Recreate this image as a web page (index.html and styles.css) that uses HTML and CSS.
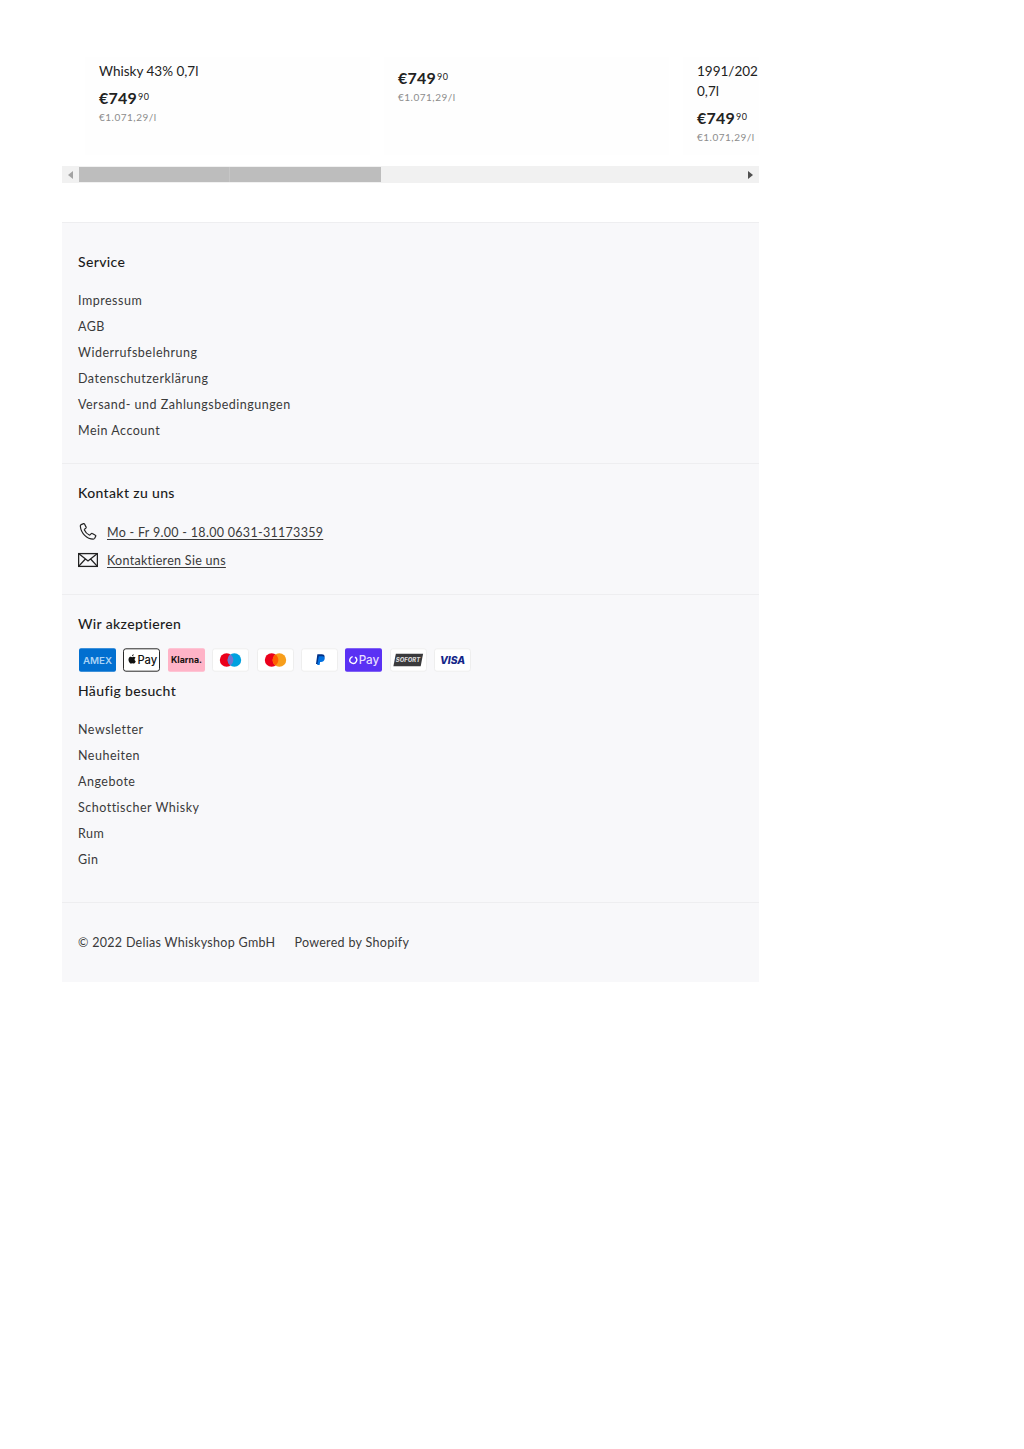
FILE: index.html
```html
<!DOCTYPE html>
<html lang="de">
<head>
  <meta charset="UTF-8" />
  <title>Delias Whiskyshop</title>
  <link rel="stylesheet" href="styles.css">
</head>
<body>
  <div class="page">
    <!-- Product slider, cut off at the right -->
    <div class="slider">
      <div class="card">
        <p class="card-title">Whisky 43% 0,7l</p>
        <p class="price">€749<sup>90</sup></p>
        <p class="unit">€1.071,29/l</p>
      </div>
      <div class="card">
        <p class="price">€749<sup>90</sup></p>
        <p class="unit">€1.071,29/l</p>
      </div>
      <div class="card">
        <p class="card-title">1991/202<br>0,7l</p>
        <p class="price">€749<sup>90</sup></p>
        <p class="unit">€1.071,29/l</p>
      </div>
    </div>
    <div class="scrollbar">
      <span class="arrow arrow-left"></span>
      <div class="scroll-track"><div class="scroll-thumb"></div></div>
      <span class="arrow arrow-right"></span>
    </div>

    <footer class="footer">
      <section class="block block-service">
        <h4>Service</h4>
        <ul class="links">
          <li><a href="#">Impressum</a></li>
          <li><a href="#">AGB</a></li>
          <li><a href="#">Widerrufsbelehrung</a></li>
          <li><a href="#">Datenschutzerklärung</a></li>
          <li><a href="#">Versand- und Zahlungsbedingungen</a></li>
          <li><a href="#">Mein Account</a></li>
        </ul>
      </section>

      <section class="block block-contact">
        <h4>Kontakt zu uns</h4>
        <div class="contact-row">
          <svg class="contact-icon" viewBox="0 0 20 20" fill="none" stroke="#222" stroke-width="1.2" stroke-linejoin="round">
            <path d="M3.2 2.6 5.6 1.6c.4-.1.7 0 .9.4l1.6 3.1c.2.4.1.7-.2 1L6.500 7.300c-.2.2-.2.4-.1.7.9 2.100 2.700 4 4.900 5 .3.100.5.100.7-.1l1.300-1.300c.3-.3.700-.3 1-.1l3.100 1.800c.4.200.5.600.3 1l-1 2c-.3.500-.8.800-1.400.8C9 17.100 3 11.500 2.300 4c0-.6.300-1.200.9-1.400Z"/>
          </svg>
          <a class="contact-link" href="#">Mo - Fr 9.00 - 18.00 0631-31173359</a>
        </div>
        <div class="contact-row">
          <svg class="contact-icon" viewBox="0 0 20 14" fill="none" stroke="#222" stroke-width="1.300">
            <rect x=".6" y=".6" width="18.800" height="12.800"/>
            <path d="M.6.6 10 8l9.400-7.400M.6 13.400l6.800-7.400M19.400 13.400 12.600 6"/>
          </svg>
          <a class="contact-link" href="#">Kontaktieren Sie uns</a>
        </div>
      </section>

      <section class="block block-pay">
        <h4>Wir akzeptieren</h4>
        <div class="pay-row">
          <svg class="pay" viewBox="0 0 38 24"><rect width="38" height="24" rx="2" fill="#016fd0"/><text x="19" y="15.800" class="pay-amex" textLength="30" lengthAdjust="spacingAndGlyphs">AMEX</text></svg>
          <svg class="pay" viewBox="0 0 38 24"><rect x=".5" y=".5" width="37" height="23" rx="2.500" fill="#fff" stroke="#222"/><path d="M9.300 8.200c.5 0 1-.4 1.300-.8.300-.4.400-.9.400-1.300-.5 0-1 .3-1.300.7-.3.300-.5.800-.4 1.400ZM11 8.700c-.7 0-1.200.4-1.600.4s-.9-.4-1.500-.4c-.8 0-1.500.5-1.900 1.200-.8 1.400-.2 3.500.6 4.700.4.500.8 1.200 1.500 1.100.6 0 .8-.4 1.500-.4s.9.400 1.500.4c.6 0 1-.5 1.400-1.100.4-.6.600-1.200.6-1.300 0 0-1.200-.5-1.200-1.800 0-1.100.9-1.600 1-1.700-.6-.8-1.400-.9-1.900-1.100Z" fill="#111"/><text x="14.800" y="16" class="pay-apple">Pay</text></svg>
          <svg class="pay" viewBox="0 0 38 24"><rect width="38" height="24" rx="2" fill="#ffb3c7"/><text x="19" y="15.200" class="pay-klarna">Klarna.</text></svg>
          <svg class="pay" viewBox="0 0 38 24"><rect x=".5" y=".5" width="37" height="23" rx="2.500" fill="#fff" stroke="#eee"/><circle cx="15" cy="12" r="7" fill="#eb001b"/><circle cx="23" cy="12" r="7" fill="#00a1df"/><path d="M19 6.300a7 7 0 0 1 0 11.400 7 7 0 0 1 0-11.400Z" fill="#7375cf"/></svg>
          <svg class="pay" viewBox="0 0 38 24"><rect x=".5" y=".5" width="37" height="23" rx="2.500" fill="#fff" stroke="#eee"/><circle cx="15" cy="12" r="7" fill="#eb001b"/><circle cx="23" cy="12" r="7" fill="#f79e1b"/><path d="M19 6.300a7 7 0 0 1 0 11.400 7 7 0 0 1 0-11.400Z" fill="#ff5f00"/></svg>
          <svg class="pay" viewBox="0 0 38 24"><rect x=".5" y=".5" width="37" height="23" rx="2.500" fill="#fff" stroke="#eee"/><path d="M16.800 6h4.400c2.300 0 3.300 1.200 3 3-.4 2.300-2 3.400-4 3.400h-1.300l-.6 3.600h-2.900Z" fill="#003087"/><path d="M18.300 8.200h3.800c1.600.3 2.500 1.300 2.200 2.900-.4 2-1.900 3-3.800 3h-.9l-.5 3h-2.500Z" fill="#0070e0"/></svg>
          <svg class="pay" viewBox="0 0 38 24"><rect width="38" height="24" rx="2" fill="#5a31f4"/><circle cx="8.500" cy="12" r="3.500" fill="none" stroke="#fff" stroke-width="1.400" stroke-dasharray="19 3" transform="rotate(-60 8.500 12)"/><text x="14" y="16.200" class="pay-shop">Pay</text></svg>
          <svg class="pay" viewBox="0 0 38 24"><rect x=".5" y=".5" width="37" height="23" rx="2.500" fill="#fff" stroke="#eee"/><path d="M6 5.500h28l-2.500 13H3.500Z" fill="#3a3a3c"/><text x="18.500" y="14.300" class="pay-sofort" textLength="25" lengthAdjust="spacingAndGlyphs">SOFORT</text></svg>
          <svg class="pay" viewBox="0 0 38 24"><rect x=".5" y=".5" width="37" height="23" rx="2.500" fill="#fff" stroke="#eee"/><text x="19" y="16" class="pay-visa">VISA</text></svg>
        </div>
        <h4 class="pay-next">Häufig besucht</h4>
        <ul class="links">
          <li><a href="#">Newsletter</a></li>
          <li><a href="#">Neuheiten</a></li>
          <li><a href="#">Angebote</a></li>
          <li><a href="#">Schottischer Whisky</a></li>
          <li><a href="#">Rum</a></li>
          <li><a href="#">Gin</a></li>
        </ul>
      </section>

      <section class="block block-legal">
        <span>© 2022 Delias Whiskyshop GmbH</span>
        <span>Powered by Shopify</span>
      </section>
    </footer>
  </div>
</body>
</html>
```

FILE: styles.css
```css
:root {
  --ink: #1c1c1c;
  --text: #3a3a3a;
  --line: #eeeef0;
  --panel: #f8f8fa;
}
*, *::before, *::after { box-sizing: border-box; }
html, body { margin: 0; }
body {
  background: #fff;
  color: var(--text);
  font-family: "Lato", "Open Sans", sans-serif;
  font-size: 12.500px;
  min-height: 1449px;
}
.page {
  width: 697px;
  margin-left: 62px;
  padding-top: 57px;
}

/* Slider */
.slider {
  display: flex;
  gap: 14px;
  height: 109px;
  padding-left: 23px;
  overflow: hidden;
}
.card {
  flex: 0 0 285px;
  height: 98px;
  padding: 4px 14px;
  background: #fefefe;
}
.card p { margin: 0; }
.card-title {
  font-size: 13.500px;
  line-height: 20px;
  color: #222;
  white-space: nowrap;
}
.card .price {
  margin-top: 7px;
  font-size: 16px;
  line-height: 20px;
  font-weight: 700;
  color: #222;
  letter-spacing: .2px;
}
.price sup {
  font-size: 9px;
  font-weight: 400;
  letter-spacing: .5px;
  margin-left: 1px;
  vertical-align: 4px;
  line-height: 0;
}
.unit {
  font-size: 10px;
  line-height: 19px;
  color: #8c8c8c;
  letter-spacing: .5px;
}

/* Scrollbar */
.scrollbar {
  display: flex;
  align-items: center;
  height: 17px;
  background: #f1f1f1;
}
.arrow {
  flex: 0 0 17px;
  display: flex;
  justify-content: center;
}
.arrow::before {
  content: "";
  border-style: solid;
  border-color: transparent;
  border-width: 4px 5px;
}
.arrow-left::before { border-right-color: #a3a3a3; border-left-width: 0; }
.arrow-right::before { border-left-color: #505050; border-right-width: 0; }
.scroll-track { flex: 1; height: 15px; }
.scroll-thumb {
  width: 302px;
  height: 15px;
  background: linear-gradient(90deg, #bdbdbd 150px, #c6c6c6 150px, #c6c6c6 151px, #bdbdbd 151px);
}

/* Footer */
.footer {
  margin-top: 39px;
  background: var(--panel);
}
.block {
  padding: 20px 16px;
  border-top: 1px solid var(--line);
}
.block-service { padding-top: 29px; padding-bottom: 19px; }
.block-contact { padding-top: 19px; }
.block-pay { padding-top: 19px; padding-bottom: 29px; }
.block-legal {
  display: flex;
  gap: 19px;
  height: 80px;
  align-items: center;
  padding-top: 0;
  padding-bottom: 0;
  line-height: 20px;
}
.block span { letter-spacing: .3px; }
h4 {
  margin: 0 0 15px;
  font-size: 14px;
  line-height: 20px;
  font-weight: 500;
  color: var(--ink);
  letter-spacing: .35px;
}
.links {
  list-style: none;
  margin: 0;
  padding: 1px 0 0;
}
.links li { line-height: 26px; letter-spacing: .5px; }
a { color: var(--text); text-decoration: none; }

.contact-row {
  display: flex;
  align-items: center;
  height: 28px;
}
.contact-icon {
  width: 20px;
  height: 20px;
  margin-right: 9px;
  flex: none;
}
.contact-link {
  text-decoration: underline;
  text-underline-offset: 2px;
  letter-spacing: .3px;
}

.pay-row {
  display: flex;
  gap: 7.400px;
  margin: -1px 0 0 1px;
}
.pay { width: 37px; height: 24px; flex: none; }
.pay-next { margin-top: 9px; }
.pay text { font-family: "Inter", "Liberation Sans", sans-serif; text-anchor: middle; }
.pay .pay-amex { font-size: 9.500px; font-weight: 600; fill: #a9d3f5; }
.pay .pay-apple { font-size: 11.500px; font-weight: 500; fill: #111; text-anchor: start; }
.pay .pay-klarna { font-size: 9px; font-weight: 700; fill: #17120f; }
.pay .pay-shop { font-size: 12px; font-weight: 500; fill: #e6defe; text-anchor: start; }
.pay .pay-sofort { font-size: 6px; font-weight: 800; font-style: italic; fill: #d8d8d8; }
.pay .pay-visa { font-size: 10.500px; font-weight: 800; font-style: italic; fill: #142688; }
```
